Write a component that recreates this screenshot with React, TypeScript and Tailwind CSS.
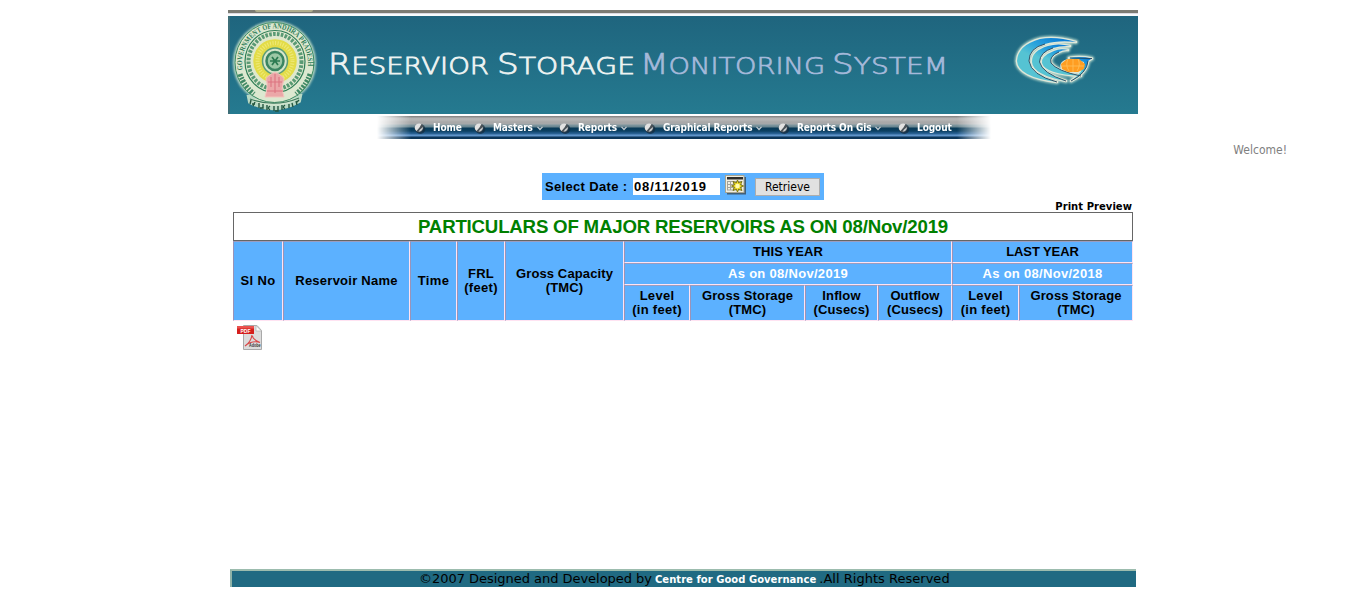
import React from "react";

function Seal() {
  return (
    <svg width="90" height="94" viewBox="0 0 90 94" className="shrink-0">
      <defs>
        <filter id="sealGlow" x="-20%" y="-20%" width="140%" height="140%">
          <feGaussianBlur stdDeviation="1" />
        </filter>
        <path id="ringTop" d="M12.500 50 A 33 35.500 0 1 1 77.500 50" />
      </defs>
      <ellipse cx="44.500" cy="42.500" rx="41.500" ry="41.500" fill="#b9d9c4" filter="url(#sealGlow)" />
      <path d="M19 77 L20 82 Q 45 95 69 81 L70 76 Z" fill="#cfe3cd" stroke="#b9d9c4" strokeWidth="4" />
      <ellipse cx="44.500" cy="42.500" rx="39.500" ry="40" fill="#dce8d0" stroke="#3c8a63" strokeWidth="1" />
      <ellipse cx="45" cy="41.500" rx="30" ry="31" fill="#dfe8d0" stroke="#2e7d55" strokeWidth="1.200" />
      <ellipse cx="45" cy="41.500" rx="26.500" ry="27.500" fill="none" stroke="#5a9a74" strokeWidth="4" strokeDasharray="2.600 1.300" />
      <ellipse cx="45" cy="41" rx="22.500" ry="22.500" fill="#e3dc48" stroke="#dfe8c8" strokeWidth="1.500" />
      <ellipse cx="45" cy="41" rx="17.500" ry="18" fill="none" stroke="#efe978" strokeWidth="4" strokeDasharray="1 1.600" />
      <ellipse cx="45" cy="41" rx="12.500" ry="13" fill="#d9e6cb" stroke="#5c9d78" strokeWidth="1.500" />
      <ellipse cx="45" cy="41" rx="8.500" ry="9" fill="#9cc8a5" stroke="#3a8460" strokeWidth="2.500" />
      <path d="M42 37 L45 41 L48 37 M40 41 H50 M42 45 L45 41 L48 45" fill="none" stroke="#2b7a50" strokeWidth="1.700" />
      <text fontSize="7.500" fontWeight="700" fill="#2f7d58" fontFamily="Liberation Serif, serif">
        <textPath href="#ringTop" textLength="116" lengthAdjust="spacingAndGlyphs">GOVERNMENT OF ANDHRA PRADESH</textPath>
      </text>
      <path d="M10 54 Q14 66 24 74 M80 54 Q76 66 66 74" fill="none" stroke="#3f8864" strokeWidth="5" strokeDasharray="2.500 1.300 1.600 1.200" />
      <path d="M35 77 L37 69 L37 63 Q34 58 40 55 Q45 50 50 55 Q56 58 53 63 L52 69 L54 77 Z" fill="#eba7a8" stroke="#f2c5bd" strokeWidth="1" />
      <path d="M41 57 V67 M45 54 V73 M49 57 V67 M37 71 H53 M38 62 H52" stroke="#dd7580" strokeWidth="1.100" />
      <path d="M20 79 Q45 88 69 78" fill="none" stroke="#3b795a" strokeWidth="1.200" />
      <path
        d="M21 80 L20 84 M25 82 L23 86 M22 84 H25 M29 83 V88 M33 84 V88 H30 M37 85 V90 M40 86 Q37 88 40 90 M44 86 V91 M48 86 V91 H45 M52 85 V90 M55 85 Q52 87 55 89 M59 84 V88 M62 83 L63 87 M66 81 L67 85 M69 80 L66 83"
        fill="none"
        stroke="#24563f"
        strokeWidth="1.400"
      />
    </svg>
  );
}

const WAVE_1 = "M66 11 Q46 5 30 8 Q8 14 7 30 Q8 46 47 51 Q21 44 19 30 Q19 17 35 13 Q48 9 66 11Z";
const WAVE_2 = "M60 15 Q48 12 38 15 Q21.500 20 22 31 Q23 44 56 50 Q32 42 29.500 31 Q30 21 43 17 Q50 14.500 60 15Z";
const WAVE_3 = "M58 19 Q50 17 44 20 Q31 25 32 32 Q35 43 71 45 Q47 40 41 32 Q39 25 49 21 Q53 18.500 58 19Z";
const WAVE_TAIL = "M59 27 Q70 25 82 27.500 L78 30 Q77 42 61 50 Q74 41 74 31Z";

function WaveLogo() {
  return (
    <svg width="90" height="60" viewBox="0 0 90 60">
      <defs>
        <filter id="waveGlow" x="-20%" y="-20%" width="140%" height="140%">
          <feGaussianBlur stdDeviation="1" />
        </filter>
        <linearGradient id="wave" x1="0.700" y1="0" x2="0.200" y2="0.700">
          <stop offset="0" stopColor="#0d7fd6" />
          <stop offset="0.400" stopColor="#2ba4dc" />
          <stop offset="0.700" stopColor="#55c3d3" />
        </linearGradient>
      </defs>
      <g filter="url(#waveGlow)" fill="#a9cfc6" stroke="#a9cfc6" strokeWidth="4.500" strokeLinejoin="round">
        <path d={WAVE_1} />
        <path d={WAVE_2} />
        <path d={WAVE_3} />
        <path d={WAVE_TAIL} />
      </g>
      <g fill="#dfe7d8" stroke="#dfe7d8" strokeWidth="2.600" strokeLinejoin="round">
        <path d={WAVE_1} />
        <path d={WAVE_2} />
        <path d={WAVE_3} />
        <path d={WAVE_TAIL} />
        <ellipse cx="63" cy="35" rx="11.500" ry="6.500" />
      </g>
      <g fill="url(#wave)">
        <path d={WAVE_1} />
        <path d={WAVE_2} />
        <path d={WAVE_3} />
        <path d={WAVE_TAIL} />
      </g>
      <path
        d="M47 51 Q21 44 19 30 Q19 17 35 13 M56 50 Q32 42 29.500 31 Q30 21 43 17 M71 45 Q47 40 41 32 Q39 25 49 21 M60 27 L82 27.500 M78 30 Q77 42 61 50"
        fill="none"
        stroke="#23435b"
        strokeWidth="0.900"
      />
      <path d="M51 33 L57 28 H69 L75 33 L74 38 L68 41 H58 L52 38 Z" fill="#ff9d21" />
      <path d="M52 35 H74 M63 28 V41 M58 28 Q55 34 59 40 M68 28 Q71 34 67 40" stroke="#ffc05c" strokeWidth="0.800" fill="none" />
    </svg>
  );
}

function Banner() {
  return (
    <header className="h-[104px] w-[910px]">
      <div className="flex h-[3px] bg-[#7b7b73]">
        <div className="ml-[27px] h-[2px] w-[58px] rounded-b bg-[#b0af90]" />
      </div>
      <div className="h-px bg-[#dcdbe2]" />
      <div className="h-[2px] bg-[#f7fbfc]" />
      <div className="flex h-[98px] bg-linear-to-b from-[#1f657e] to-[#257a90]">
        <div className="w-[2px] bg-[#3d6e78]" />
        <div className="pt-[4px]">
          <Seal />
        </div>
        <svg width="640" height="98" viewBox="0 0 640 98" fontFamily="DejaVu Sans Light, DejaVu Sans, sans-serif" fontWeight="200">
          <g fill="#edf3f2" fontSize="23" stroke="#edf3f2" strokeWidth="0.800">
            <text x="8" y="57.500" textLength="161" lengthAdjust="spacingAndGlyphs">
              <tspan fontSize="28">R</tspan>ESERVIOR
            </text>
            <text x="177" y="57.500" textLength="138" lengthAdjust="spacingAndGlyphs">
              <tspan fontSize="28">S</tspan>TORAGE
            </text>
          </g>
          <g fill="#a5b9da" fontSize="23" stroke="#a5b9da" strokeWidth="0.700">
            <text x="320" y="57.500" textLength="185" lengthAdjust="spacingAndGlyphs">
              <tspan fontSize="28">M</tspan>ONITORING
            </text>
            <text x="512" y="57.500" textLength="116" lengthAdjust="spacingAndGlyphs">
              <tspan fontSize="28">S</tspan>YSTEM
            </text>
          </g>
        </svg>
        <div className="ml-[50px] pt-[15px]">
          <WaveLogo />
        </div>
      </div>
    </header>
  );
}

function Bullet() {
  return (
    <svg width="12" height="12" viewBox="0 0 12 12" className="shrink-0">
      <circle cx="6.300" cy="7" r="5" fill="#15293a" opacity="0.650" />
      <circle cx="5" cy="5.800" r="4.400" fill="#4a5258" />
      <path d="M0.700 5.800 A4.300 4.300 0 0 1 7.500 2.100 L5.500 5.500 L2.500 9 A4.300 4.300 0 0 1 0.700 5.800Z" fill="#e2e2e2" />
      <path d="M4.500 9.700 Q9 9 9 5 L6 7.500Z" fill="#c9ced2" />
    </svg>
  );
}

function NavItem({ label, menu, width }: { label: string; menu?: boolean; width: string }) {
  return (
    <li className={`flex h-[23px] items-center ${width}`}>
      <Bullet />
      <a className="ml-[7px] text-[10px] leading-[12px] font-bold tracking-[-0.1px] whitespace-nowrap text-white">{label}</a>
      {menu && (
        <svg width="6" height="5" viewBox="0 0 6 5" className="mt-px ml-[4px] shrink-0">
          <path d="M0.500 0.800 L3 3.500 L5.500 0.800" fill="none" stroke="#c4cdd3" strokeWidth="1.200" />
        </svg>
      )}
    </li>
  );
}

function Nav() {
  return (
    <nav className="mt-[2px] ml-[147px] h-[23px] w-[616px] bg-[linear-gradient(to_bottom,#858585_0px,#8c8c8c_1px,#b2b2b2_2px,#b5b5b5_4px,#a8a8a8_6px,#a5a8aa_8px,#7f979f_9px,#66838f_11px,#093b58_12px,#0b3f61_15px,#225b8b_17px,#2e6598_18px,#6398cc_19px,#5a8fc6_20px,#0c3558_21px,#0c3558_23px)] mask-[linear-gradient(to_right,transparent_0,transparent_2px,black_36px,black_582px,transparent_616px)] font-['DejaVu_Sans_Condensed','DejaVu_Sans',sans-serif]">
      <ul className="flex pl-[39px]">
        <NavItem label="Home" width="w-[60px]" />
        <NavItem label="Masters" width="w-[85px]" menu />
        <NavItem label="Reports" width="w-[85px]" menu />
        <NavItem label="Graphical Reports" width="w-[134px]" menu />
        <NavItem label="Reports On Gis" width="w-[120px]" menu />
        <NavItem label="Logout" width="w-[60px]" />
      </ul>
    </nav>
  );
}

function CalendarIcon() {
  return (
    <svg width="22" height="20" viewBox="0 0 22 20">
      <rect x="2" y="2" width="19" height="17.500" fill="#33332f" opacity="0.650" />
      <rect x="0.500" y="0.500" width="18.500" height="17" fill="#f2efe2" stroke="#a7a593" />
      <rect x="2" y="2" width="16" height="2.500" fill="#2e2e2b" />
      <path d="M2.500 6 V15 M5.500 6 V15 M8.500 6 V15 M11.500 6 V15 M2 6.500 H17 M2 9.500 H17 M2 12.500 H17 M2 15 H17" stroke="#a3a39b" />
      <path d="M12.500 5 L13.700 8 L17 6.500 L15.500 9.800 L18.500 11 L15.500 12.200 L17 15.500 L13.700 14 L12.500 17 L11.200 14 L8 15.500 L9.500 12.200 L6.500 11 L9.500 9.800 L8 6.500 L11.200 8Z" fill="#f2df2c" stroke="#77700b" strokeWidth="0.900" />
      <circle cx="12.500" cy="11" r="2.200" fill="#fffbb4" />
    </svg>
  );
}

function PdfIcon() {
  return (
    <svg width="26" height="25" viewBox="0 0 26 25" className="overflow-visible">
      <path d="M6.500 0.500 H20 L24.500 5.500 V24.500 H6.500Z" fill="#dcdcdc" stroke="#a9a9a9" />
      <path d="M19 0.500 V6 H24.500Z" fill="#fafafa" stroke="#b5b5b5" strokeWidth="0.700" />
      <path d="M8 21 Q14 17 15 10 Q16 15 23 17.500 Q15 15 8 21Z" fill="none" stroke="#d9494a" strokeWidth="1.200" />
      <rect x="0" y="1" width="17" height="8" rx="0.500" fill="#d51f1d" />
      <rect x="0" y="1" width="17" height="2.500" fill="#ea5350" />
      <text x="3.500" y="7.500" fontSize="5.500" fontWeight="700" fill="#fff" fontFamily="Liberation Sans, sans-serif" textLength="10" lengthAdjust="spacingAndGlyphs">PDF</text>
      <text x="12" y="22" fontSize="5" fontWeight="700" fill="#333" fontFamily="Liberation Sans, sans-serif" textLength="11.500" lengthAdjust="spacingAndGlyphs">Adobe</text>
    </svg>
  );
}

function Cell({ children, className = "" }: { children: React.ReactNode; className?: string }) {
  return (
    <div className={`flex items-center justify-center border-t border-r border-b border-l border-t-[#9a9cc0] border-r-[#ffe3f2] border-b-[#ffe3f2] border-l-[#9a93b8] text-center whitespace-nowrap ${className}`}>
      <span>{children}</span>
    </div>
  );
}

function ReservoirTable() {
  return (
    <section className="ml-[5px] w-[900px] font-['Liberation_Sans',Arial,sans-serif]">
      <h1 className="flex h-[29px] items-center justify-center border border-[#666] bg-white text-[18.67px] leading-[22px] font-bold tracking-[-0.2px] text-[#008000]">
        PARTICULARS OF MAJOR RESERVOIRS AS ON 08/Nov/2019
      </h1>
      <div className="grid grid-cols-[50px_127px_47px_48px_119px_66px_115px_73px_74px_67px_114px] grid-rows-[22px_22px_36px] bg-[#5cb1ff] text-[13px] leading-[14px] font-bold tracking-[0.12px] text-black">
        <Cell className="row-span-3 tracking-[0.35px]">Sl No</Cell>
        <Cell className="row-span-3 tracking-[0.25px]">Reservoir Name</Cell>
        <Cell className="row-span-3 tracking-[0.4px]">Time</Cell>
        <Cell className="row-span-3 tracking-[0.3px]">FRL<br />(feet)</Cell>
        <Cell className="row-span-3">Gross Capacity<br />(TMC)</Cell>
        <Cell className="col-span-4">THIS YEAR</Cell>
        <Cell className="col-span-2 tracking-[-0.1px]">LAST YEAR</Cell>
        <Cell className="col-span-4 tracking-[0.3px] text-white">As on 08/Nov/2019</Cell>
        <Cell className="col-span-2 tracking-[0.3px] text-white">As on 08/Nov/2018</Cell>
        <Cell className="tracking-[0.3px]">Level<br />(in feet)</Cell>
        <Cell>Gross Storage<br />(TMC)</Cell>
        <Cell>Inflow<br />(Cusecs)</Cell>
        <Cell>Outflow<br />(Cusecs)</Cell>
        <Cell className="tracking-[0.3px]">Level<br />(in feet)</Cell>
        <Cell>Gross Storage<br />(TMC)</Cell>
      </div>
      <div className="pt-1 pl-1">
        <PdfIcon />
      </div>
    </section>
  );
}

export default function App() {
  return (
    <div className="flex h-[607px] flex-col overflow-hidden bg-white pt-[10px]">
      <div className="ml-[228px] w-[910px]">
        <Banner />
        <Nav />
      </div>
      <div className="flex h-[34px] justify-end pt-[3px] pr-[79px] font-['DejaVu_Sans_Condensed','DejaVu_Sans',sans-serif] text-[12px] leading-[16px] text-[#808080]">
        Welcome!
      </div>
      <main className="ml-[228px] flex h-[396px] w-[910px] flex-col">
        <form className="ml-[314px] flex h-[27px] w-[282px] items-center bg-[#5cb1ff] pl-[3px] font-['Liberation_Sans',Arial,sans-serif] text-[13px] leading-[14px] font-bold">
          <label className="w-[88px] tracking-[0.33px] whitespace-nowrap">Select Date :</label>
          <input className="h-[17px] w-[87px] bg-white px-px tracking-[0.85px] outline-none" defaultValue="08/11/2019" />
          <div className="mb-[3px] ml-[5px]">
            <CalendarIcon />
          </div>
          <button type="button" className="ml-[8px] h-[18px] w-[65px] border border-[#adadad] bg-[#e1e1e1] font-['DejaVu_Sans_Condensed','DejaVu_Sans',sans-serif] text-[12px] leading-[17px] font-normal text-black">
            Retrieve
          </button>
        </form>
        <div className="flex h-[12px] justify-end pr-[6px] font-['DejaVu_Sans',Verdana,sans-serif] text-[10px] leading-[13px] font-bold tracking-[0.05px] whitespace-nowrap">
          Print Preview
        </div>
        <ReservoirTable />
      </main>
      <footer className="ml-[230px] flex h-[18px] w-[906px] items-center border-t-2 border-l-2 border-t-[#9cbcae] border-l-[#8fb3a8] bg-[#206a82] pb-px pl-[187px] font-['DejaVu_Sans',Verdana,sans-serif] text-[13px] leading-[16px] tracking-[-0.03px] whitespace-pre text-black">
        <span>©2007 Designed and Developed by</span>
        <b className="mt-[2px] pr-[3px] pl-[3px] text-[10px] tracking-[0.03px] text-white">Centre for Good Governance</b>
        <span className="tracking-[0.02px]">.All Rights Reserved</span>
      </footer>
    </div>
  );
}
